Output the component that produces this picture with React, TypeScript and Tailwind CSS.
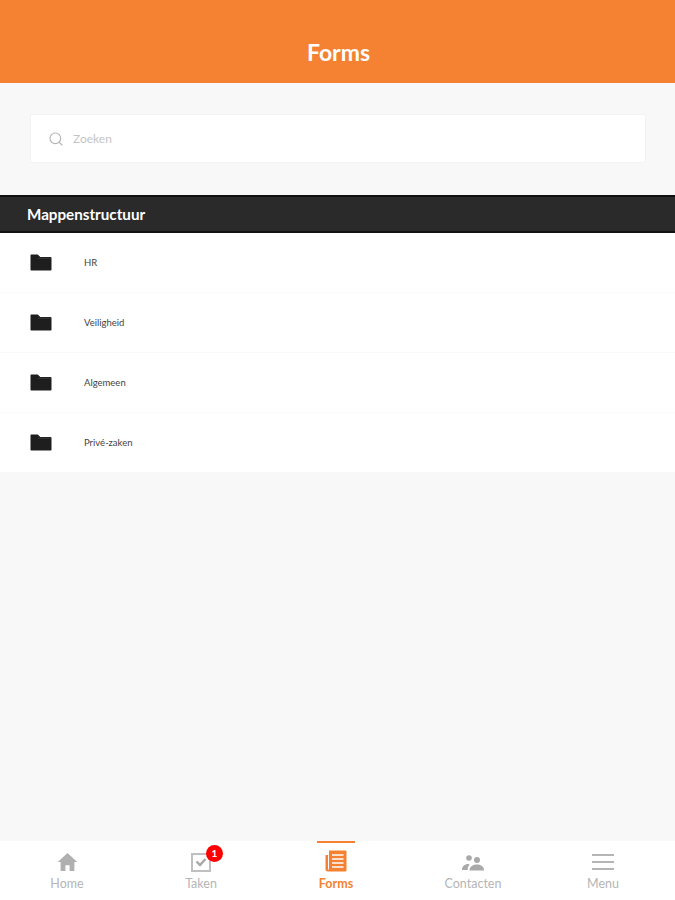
import React from 'react';
import { Search } from 'lucide-react';

const folders = ['HR', 'Veiligheid', 'Algemeen', 'Privé-zaken'];

const FolderIcon = () => (
  <svg width="22" height="17" viewBox="0 0 22 17" className="block">
    <path
      d="M1.5 0.5h6.2l2.6 2.6h10.2c.6 0 1 .4 1 1v11.4c0 .6-.4 1-1 1H1.500c-.6 0-1-.4-1-1V1.500c0-.6.4-1 1-1z"
      fill="#1e1e1e"
    />
    <path d="M8 4.300h13" stroke="#444" strokeWidth="0.7" />
  </svg>
);

const HomeIcon = () => (
  <svg width="21" height="20" viewBox="0 0 22 20">
    <path d="M11 0.500 0.800 10h3v9.500h5v-6h4.400v6h5V10h3z" fill="#b0b0b0" />
  </svg>
);

const TasksIcon = () => (
  <svg width="20" height="20" viewBox="0 0 20 20" fill="none">
    <path d="M1 2h18v17H1z" stroke="#c0c0c0" strokeWidth="2" />
    <path d="M5.500 9.500 9 13l5.500-6" stroke="#a8a8a8" strokeWidth="2.400" />
  </svg>
);

const FormsIcon = () => (
  <svg width="22" height="22" viewBox="0 0 22 22">
    <path d="M4 0.500h16.500a1 1 0 0 1 1 1v19a1 1 0 0 1-1 1H3a2.500 2.500 0 0 1-2.500-2.500V5H3v14.500h1z" fill="#f58233" />
    <path d="M7 5h11.500M7 9h11.500M7 13h11.500M7 17h11.500" stroke="#fff" strokeWidth="1.600" />
  </svg>
);

const ContactsIcon = () => (
  <svg width="22" height="16" viewBox="0 0 22 16" className="mb-[1px]">
    <circle cx="7" cy="3" r="2.800" fill="#a9a9a9" />
    <circle cx="15" cy="5" r="3" fill="#a9a9a9" />
    <path d="M0 15c0-3 2-5.500 5.500-6 1 0 1.500.2 2 .4C6.300 10.800 5.700 13 5.700 15z" fill="#a9a9a9" />
    <path d="M7.500 15.500c0-3.500 3-6 7.500-6s7 2.500 7 6z" fill="#a9a9a9" />
  </svg>
);

const MenuIcon = () => (
  <svg width="22" height="16" viewBox="0 0 22 16" className="mb-[2px]">
    <path d="M0 1h22M0 8h22M0 15h22" stroke="#b5b5b5" strokeWidth="2" />
  </svg>
);

const tabs = [
  { label: 'Home', icon: <HomeIcon /> },
  { label: 'Taken', icon: <TasksIcon />, badge: '1' },
  { label: 'Forms', icon: <FormsIcon />, active: true },
  { label: 'Contacten', icon: <ContactsIcon /> },
  { label: 'Menu', icon: <MenuIcon /> },
];

export default function App() {
  return (
    <div className="flex h-[900px] w-[675px] flex-col overflow-hidden bg-[#f8f8f8] font-['Lato',sans-serif]">
      {/* Header */}
      <header className="flex h-[83px] shrink-0 items-center justify-center bg-[#f58233] pt-[22px] pl-[2px]">
        <h1 className="text-[23px] font-bold text-white">Forms</h1>
      </header>

      {/* Search */}
      <div className="pt-[31px] pr-[29px] pb-[32px] pl-[30px]">
        <div className="flex h-[49px] items-center gap-[9px] border border-[#f3f3f3] bg-white pl-[17px]">
          <Search className="h-[16px] w-[16px] text-[#b5b5b5]" strokeWidth={1.750} />
          <span className="text-[12px] text-[#c4c4c4]">Zoeken</span>
        </div>
      </div>

      {/* Folders */}
      <div className="flex h-[38px] shrink-0 items-center border-y-2 border-[#111] bg-[#2a2a2a] pl-[27px]">
        <span className="text-[15.200px] font-bold text-white">Mappenstructuur</span>
      </div>
      <ul className="bg-white">
        {folders.map((name) => (
          <li key={name} className="flex h-[60px] items-center border-b border-[#f8f8f8] pl-[30px]">
            <FolderIcon />
            <span className="mt-[2px] ml-[32px] text-[9.500px] text-[#444]">{name}</span>
          </li>
        ))}
      </ul>

      {/* Tab bar */}
      <nav className="mt-auto grid h-[59px] shrink-0 grid-cols-[134px_134px_136px_138px_122px] bg-white">
        {tabs.map((tab) => (
          <div key={tab.label} className="flex justify-center">
            <div
              className={`relative flex w-[38px] flex-col items-center border-t-2 ${
                tab.active ? 'border-[#f58233]' : 'border-transparent'
              }`}
            >
              <div className="flex h-[29px] items-end">
                {tab.icon}
                {tab.badge && (
                  <span className="absolute top-[2px] left-[24px] flex h-[17px] w-[17px] items-center justify-center rounded-full bg-[#f00] text-[10px] font-bold text-white">
                    {tab.badge}
                  </span>
                )}
              </div>
              <span
                className={`mt-[3px] text-[12.500px] whitespace-nowrap ${
                  tab.active ? 'font-bold text-[#f58233]' : 'text-[#b5b5b5]'
                }`}
              >
                {tab.label}
              </span>
            </div>
          </div>
        ))}
      </nav>
    </div>
  );
}
